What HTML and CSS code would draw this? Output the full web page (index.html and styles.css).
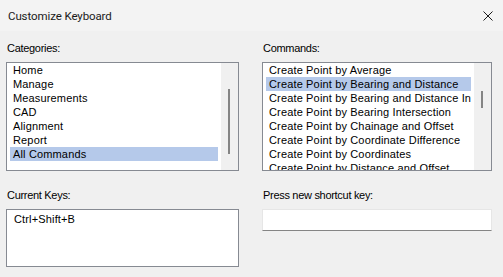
FILE: index.html
```html
<!DOCTYPE html>
<html>
<head>
  <link rel="stylesheet" href="styles.css">
</head>
<body>
    <div class="titlebar">
        <span class="title">Customize Keyboard</span>
        <svg class="close" width="10" height="10" viewBox="0 0 10 10">
            <path d="M0.5 0.5 L9.5 9.5 M9.5 0.5 L0.5 9.5" stroke="#1b1b1b" stroke-width="1" fill="none"/>
        </svg>
    </div>

    <div class="dialog">
        <div class="field">
            <div class="label">Categories:</div>
            <div class="listbox">
                <div class="items">
                    <div class="item">Home</div>
                    <div class="item">Manage</div>
                    <div class="item">Measurements</div>
                    <div class="item">CAD</div>
                    <div class="item">Alignment</div>
                    <div class="item">Report</div>
                    <div class="item selected">All Commands</div>
                </div>
                <div class="scrollbar">
                    <div class="thumb thumb-categories"></div>
                </div>
            </div>
        </div>

        <div class="field">
            <div class="label">Commands:</div>
            <div class="listbox">
                <div class="items">
                    <div class="item">Create Point by Average</div>
                    <div class="item selected">Create Point by Bearing and Distance</div>
                    <div class="item">Create Point by Bearing and Distance Intersection</div>
                    <div class="item">Create Point by Bearing Intersection</div>
                    <div class="item">Create Point by Chainage and Offset</div>
                    <div class="item">Create Point by Coordinate Difference</div>
                    <div class="item">Create Point by Coordinates</div>
                    <div class="item">Create Point by Distance and Offset</div>
                </div>
                <div class="scrollbar">
                    <div class="thumb thumb-commands"></div>
                </div>
            </div>
        </div>

        <div class="field">
            <div class="label">Current Keys:</div>
            <div class="keys">Ctrl+Shift+B</div>
        </div>

        <div class="field">
            <div class="label">Press new shortcut key:</div>
            <div class="shortcut"></div>
        </div>
    </div>
</body>
</html>
```

FILE: styles.css
```css
* {
    padding: 0px;
    margin: 0px;
    box-sizing: border-box;
}

body {
    background-color: #f0f0f0;
    font-family: "Liberation Sans", Arial, sans-serif;
    color: #000;
    width: 503px;
    height: 277px;
    overflow: hidden;
}

.titlebar {
    height: 31px;
    background-color: #f3f3f3;
    display: flex;
    align-items: center;
    justify-content: space-between;
    padding: 0 10px 0 8px;
}

.title {
    font-family: "Segoe UI", Roboto, sans-serif;
    font-size: 11.5px;
    letter-spacing: -0.1px;
    color: #1a1a1a;
}

.close {
    display: block;
}

.dialog {
    display: grid;
    grid-template-columns: 233px 230px;
    column-gap: 23px;
    row-gap: 17px;
    padding: 10px 0 0 6px;
}

.label {
    font-size: 11px;
    line-height: 14px;
    letter-spacing: -0.3px;
    margin-bottom: 7px;
    padding-left: 1px;
}

.listbox {
    height: 109px;
    border: 1px solid #868a92;
    background-color: #fff;
    display: flex;
}

.items {
    flex: 1;
    min-width: 0;
    overflow: hidden;
    padding: 0 3px;
}

.item {
    font-size: 11px;
    line-height: 14px;
    letter-spacing: 0.15px;
    padding-left: 3px;
    white-space: nowrap;
    overflow: hidden;
}

.item.selected {
    background-color: #b5c9ea;
}

.scrollbar {
    width: 17px;
    background-color: #f0f0f0;
    padding-left: 7px;
}

.thumb {
    width: 2px;
    background-color: #858585;
}

.thumb-categories {
    margin-top: 26px;
    height: 65px;
}

.thumb-commands {
    margin-top: 28px;
    height: 17px;
}

.keys {
    height: 58px;
    border: 1px solid #868a92;
    background-color: #fff;
    font-size: 11px;
    line-height: 14px;
    letter-spacing: 0.15px;
    padding: 2px 7px;
}

.shortcut {
    height: 22px;
    margin-top: 1px;
    background-color: #fff;
    border: 1px solid #e6e6e6;
    border-bottom: 1px solid #858585;
}
```
